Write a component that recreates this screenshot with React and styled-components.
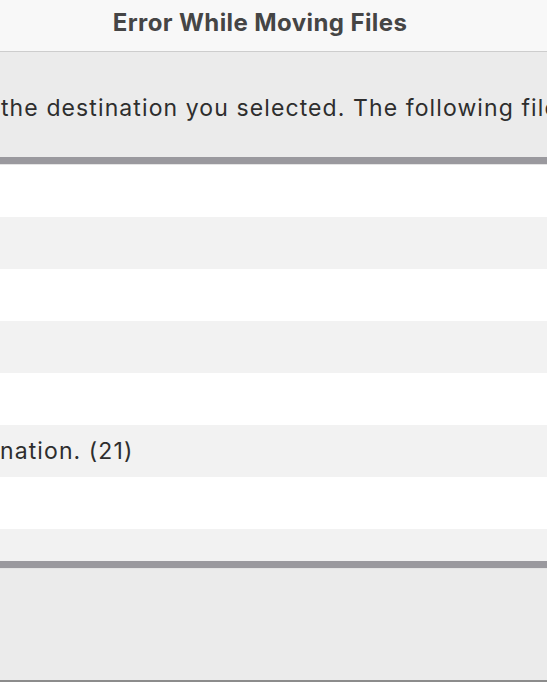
import React from "react";
import styled, { createGlobalStyle } from "styled-components";

const GlobalStyle = createGlobalStyle`
    html, body {
        margin: 0;
        padding: 0;
        height: 684px;
        overflow: hidden;
        background: #ffffff;
        font-family: Inter, "Noto Sans", sans-serif;
    }
`

const Sheet = styled.div`
    width: 547px;
    height: 684px;
    display: flex;
    flex-direction: column;
    overflow: hidden;
`

const Header = styled.header`
    height: 52px;
    flex: none;
    box-sizing: border-box;
    display: flex;
    align-items: center;
    justify-content: center;
    padding: 0 27px 6px 0;
    background: #f8f8f8;
    border-bottom: 1px solid #cdcdcd;
`

const Title = styled.h1`
    margin: 0;
    font-size: 24px;
    font-weight: 700;
    color: #454545;
    letter-spacing: 0.4px;
`

const Message = styled.div`
    height: 105px;
    flex: none;
    display: flex;
    align-items: center;
    background: #ebebeb;
    overflow: hidden;
    white-space: nowrap;
`

const MessageText = styled.p`
    margin: 0;
    padding: 7px 0 0 1px;
    font-size: 23px;
    letter-spacing: 1.1px;
    color: #2e2e2e;
`

const Divider = styled.div`
    height: 7px;
    flex: none;
    background: #9a999e;
    border-bottom: 1px solid #e4e4e4;
`

const List = styled.div`
    height: 396px;
    flex: none;
    display: flex;
    flex-direction: column;
    overflow: hidden;
`

const Row = styled.div`
    height: 52px;
    flex: none;
    display: flex;
    align-items: center;
    background: ${p => (p.$odd ? "#f2f2f2" : "#ffffff")};
    font-size: 23px;
    letter-spacing: 1.1px;
    color: #2e2e2e;
    white-space: nowrap;
`

const Footer = styled.div`
    height: 111px;
    flex: none;
    background: #ebebeb;
`

const Bottom = styled.div`
    flex: none;
    border-top: 2px solid #8c8c8c;
    display: flex;
    justify-content: center;
    height: 40px;
`

const BottomLabel = styled.span`
    margin-top: -1px;
    font-size: 22px;
    font-weight: 700;
    color: #2a2a2a;
`

const rows = ["", "", "", "", "", "nation. (21)", "", ""];

export default function App()
{
    return (
        <Sheet>
            <GlobalStyle />
            <Header>
                <Title>Error While Moving Files</Title>
            </Header>
            <Message>
                <MessageText>the destination you selected. The following files could not be moved.</MessageText>
            </Message>
            <Divider />
            <List>
                {rows.map((text, i) => (
                    <Row key={i} $odd={i % 2 === 1}>{text}</Row>
                ))}
            </List>
            <Divider />
            <Footer />
            <Bottom>
                <BottomLabel>Skip All Files</BottomLabel>
            </Bottom>
        </Sheet>
    )
}
